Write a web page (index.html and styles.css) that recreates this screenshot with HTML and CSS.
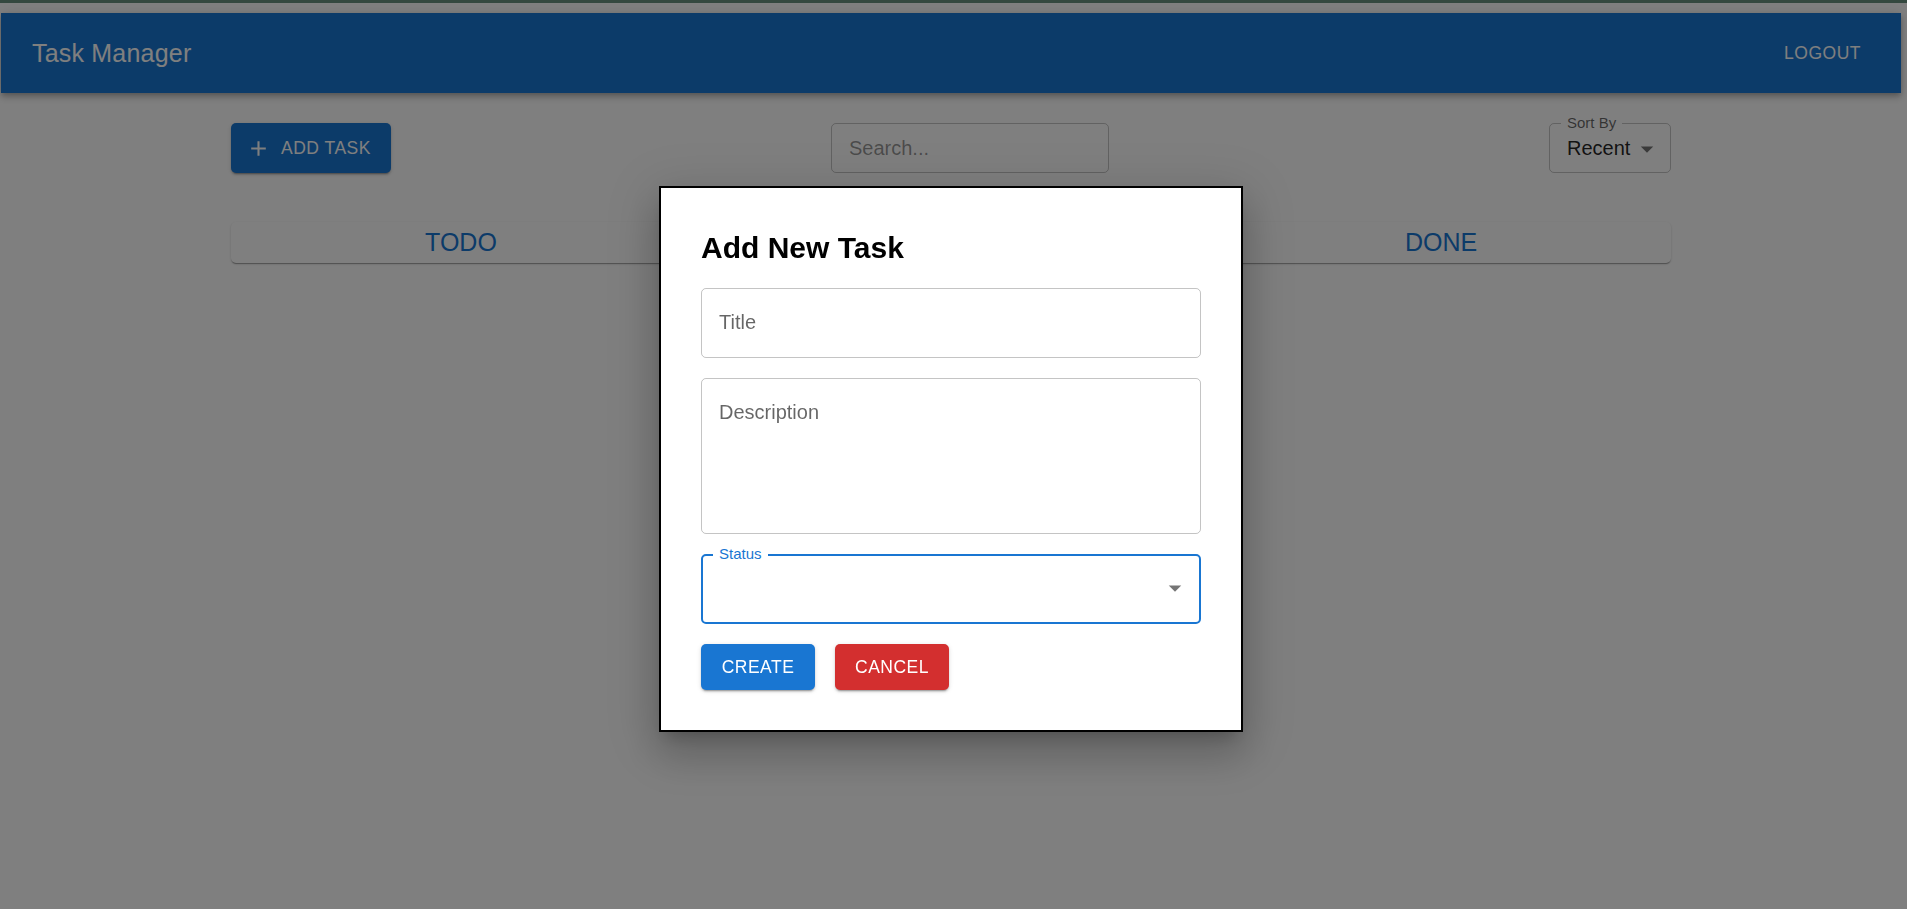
FILE: index.html
```html
<!DOCTYPE html>
<html lang="en">
<head>
<meta charset="utf-8">
<title>Task Manager</title>
<link rel="stylesheet" href="styles.css">
</head>
<body>
<div class="topstrip"></div>
<div class="page">
  <header class="appbar">
    <div class="brand">Task Manager</div>
    <button class="logout">Logout</button>
  </header>

  <main class="container">
    <div class="toolbar">
      <button class="btn btn-primary btn-add">
        <svg class="btn-icon" viewBox="0 0 24 24" aria-hidden="true"><path d="M19 13h-6v6h-2v-6H5v-2h6V5h2v6h6v2z"/></svg>
        <span>Add Task</span>
      </button>
      <div class="search">
        <span class="placeholder">Search...</span>
      </div>
      <div class="sort">
        <span class="float-label">Sort By</span>
        <span class="sort-value">Recent</span>
        <svg class="arrow" viewBox="0 0 24 24" aria-hidden="true"><path d="M7 10l5 5 5-5z"/></svg>
      </div>
    </div>

    <div class="columns">
      <div class="col-head">TODO</div>
      <div class="col-head" aria-label="IN PROGRESS"></div>
      <div class="col-head">DONE</div>
    </div>
  </main>
</div>

<div class="backdrop"></div>

<div class="modal">
  <h2 class="modal-title">Add New Task</h2>
  <div class="field field-title"><span class="field-label">Title</span></div>
  <div class="field field-desc"><span class="field-label">Description</span></div>
  <div class="field field-status">
    <span class="float-label status-label">Status</span>
    <svg class="arrow status-arrow" viewBox="0 0 24 24" aria-hidden="true"><path d="M7 10l5 5 5-5z"/></svg>
  </div>
  <div class="actions">
    <button class="btn btn-primary btn-modal">Create</button>
    <button class="btn btn-danger btn-modal">Cancel</button>
  </div>
</div>
</body>
</html>
```

FILE: styles.css
```css
* { box-sizing: border-box; }

html, body {
  margin: 0;
  padding: 0;
  height: 100%;
}

body {
  background: #ffffff;
  font-family: "Liberation Sans", Arial, sans-serif;
  color: rgba(0, 0, 0, 0.87);
  overflow: hidden;
}

.topstrip {
  height: 3px;
  background: #68907e;
}

.page {
  width: 1900px;
  margin-left: 1px;
  padding-top: 10px;
}

.appbar {
  height: 80px;
  background: #1976d2;
  color: #ffffff;
  display: flex;
  align-items: center;
  justify-content: space-between;
  padding: 0 30px 0 31px;
  box-shadow: 0 2px 5px -1px rgba(0,0,0,.2), 0 5px 6px 0 rgba(0,0,0,.14), 0 1px 12px 0 rgba(0,0,0,.12);
}

.brand {
  font-size: 25px;
  line-height: 1.6;
  letter-spacing: 0.2px;
}

.logout {
  background: none;
  border: 0;
  color: #ffffff;
  font-family: inherit;
  font-size: 17.5px;
  text-transform: uppercase;
  letter-spacing: 0.5px;
  padding: 8px 10px;
}

.container {
  width: 1440px;
  margin: 30px auto 0;
}

.toolbar {
  display: flex;
  justify-content: space-between;
  align-items: stretch;
  height: 50px;
}

.btn {
  border: 0;
  border-radius: 5px;
  color: #ffffff;
  font-family: inherit;
  font-size: 17.5px;
  text-transform: uppercase;
  letter-spacing: 0.5px;
  display: inline-flex;
  align-items: center;
  justify-content: center;
  padding: 0 20px;
  box-shadow: 0 3px 1px -2px rgba(0,0,0,.2), 0 2px 2px 0 rgba(0,0,0,.14), 0 1px 5px 0 rgba(0,0,0,.12);
}

.btn-primary { background: #1976d2; }
.btn-danger { background: #d32f2f; }

.btn-add {
  width: 160px;
}

.btn-icon {
  width: 25px;
  height: 25px;
  fill: #ffffff;
  margin-left: -5px;
  margin-right: 10px;
}

.search {
  width: 278px;
  border: 1px solid rgba(0, 0, 0, 0.23);
  border-radius: 5px;
  display: flex;
  align-items: center;
  padding-left: 17px;
}

.placeholder {
  font-size: 20px;
  color: rgba(0, 0, 0, 0.42);
}

.sort {
  position: relative;
  width: 122px;
  border: 1px solid rgba(0, 0, 0, 0.23);
  border-radius: 5px;
  display: flex;
  align-items: center;
  padding-left: 17px;
}

.float-label {
  position: absolute;
  top: -10px;
  left: 11px;
  padding: 0 6px;
  background: #ffffff;
  font-size: 15px;
  line-height: 18px;
  color: rgba(0, 0, 0, 0.6);
}

.sort-value {
  font-size: 20px;
  color: rgba(0, 0, 0, 0.87);
}

.arrow {
  position: absolute;
  width: 30px;
  height: 30px;
  fill: rgba(0, 0, 0, 0.54);
}

.sort .arrow {
  right: 8px;
  top: 10px;
}

.columns {
  display: grid;
  grid-template-columns: repeat(3, 1fr);
  gap: 30px;
  margin-top: 49px;
}

.col-head {
  background: #ffffff;
  border-radius: 5px;
  text-align: center;
  font-size: 25px;
  line-height: 41px;
  min-height: 41px;
  color: #1976d2;
  box-shadow: 0 2px 1px -1px rgba(0,0,0,.2), 0 1px 1px 0 rgba(0,0,0,.14), 0 1px 3px 0 rgba(0,0,0,.12);
}

.backdrop {
  position: fixed;
  inset: 0;
  background: rgba(0, 0, 0, 0.5);
}

.modal {
  position: absolute;
  top: 186px;
  left: 659px;
  width: 584px;
  padding: 40px;
  background: #ffffff;
  border: 2px solid #000000;
  box-shadow: 0 11px 15px -7px rgba(0,0,0,.2), 0 24px 38px 3px rgba(0,0,0,.14), 0 9px 46px 8px rgba(0,0,0,.12);
  display: flex;
  flex-direction: column;
  gap: 20px;
}

.modal-title {
  margin: 0;
  font-size: 30px;
  line-height: 40px;
  font-weight: 700;
  color: #000000;
}

.field {
  position: relative;
  border: 1px solid rgba(0, 0, 0, 0.23);
  border-radius: 5px;
  padding: 19px 17px 0;
}

.field-title { height: 70px; }
.field-desc { height: 156px; }

.field-label {
  display: block;
  font-size: 20px;
  line-height: 29px;
  color: rgba(0, 0, 0, 0.6);
}

.field-status {
  height: 70px;
  border: 2px solid #1976d2;
}

.status-label {
  top: -11px;
  left: 10px;
  color: #1976d2;
}

.status-arrow {
  right: 9px;
  top: 17px;
}

.actions {
  display: flex;
  gap: 20px;
}

.btn-modal {
  height: 46px;
  width: 114px;
}
```
